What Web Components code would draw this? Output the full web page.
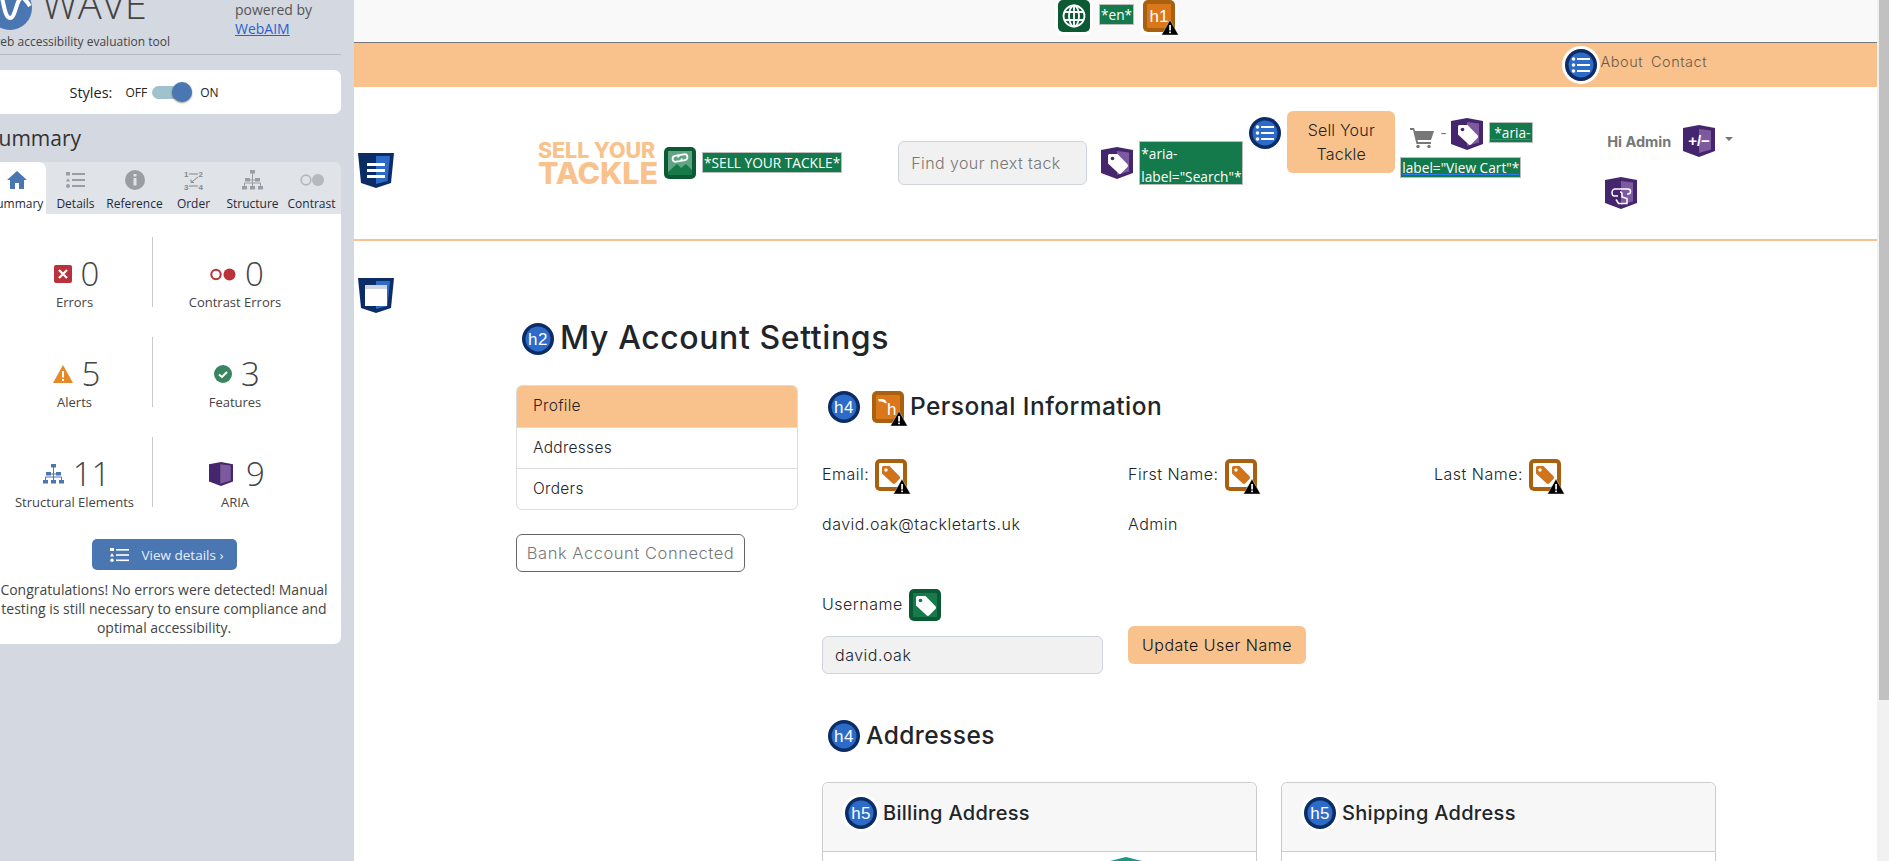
<!DOCTYPE html>
<html lang="en">
<head>
<meta charset="utf-8">
<title>My Account Settings</title>
<style>
  html, body { margin: 0; height: 100%; overflow: hidden; background: #fff; }
  body { display: flex; font-family: Inter, "Open Sans", sans-serif; }
</style>
</head>
<body>
<wave-sidebar></wave-sidebar>
<site-page></site-page>
<page-scrollbar></page-scrollbar>

<script>
const TAG = (hole) => `<path d="M7 8.5a1.5 1.5 0 0 1 1.5-1.5h8l10 10.2a2 2 0 0 1 0 2.8l-6.200 6.200a2 2 0 0 1-2.800 0L7 16.500z" fill="#fff"/><circle cx="11.500" cy="11.500" r="1.800" fill="${hole}"/>`;
const LIST = `<g fill="#fff"><circle cx="8.500" cy="10" r="1.800"/><circle cx="8.500" cy="16" r="1.800"/><circle cx="8.500" cy="22" r="1.800"/><rect x="12" y="9" width="13" height="2"/><rect x="12" y="15" width="13" height="2"/><rect x="12" y="21" width="13" height="2"/></g>`;
const WARN = `<polygon points="27,20 35.500,35 18.500,35" fill="#000" stroke="#fff" stroke-width=".4"/><rect x="26.200" y="25" width="1.700" height="5.500" fill="#fff"/><rect x="26.200" y="31.500" width="1.700" height="1.700" fill="#fff"/>`;
const label = (t, size) => `<text x="16" y="${size === 14 ? 21 : 22}" text-anchor="middle" font-family="Liberation Sans, sans-serif" font-size="${size || 17}" fill="#fff">${t}</text>`;

const square = (outer, inner, body) => `<rect width="32" height="32" rx="5" fill="${outer}"/><rect x="4" y="4" width="24" height="24" rx="1" fill="${inner}"/>${body}`;
const circle = (body) => `<circle cx="16" cy="16" r="16" fill="#0c2c66"/><circle cx="16" cy="16" r="12.500" fill="#2d6bc8"/>${body}`;
const shield = (body) => `<path d="M0 3 16 0l16 3v23l-16 6-16-6z" fill="#45266e"/><path d="M16 4l12 1.500v19L16 28z" fill="#7d5a9e"/>${body}`;

const GLYPHS = {
  globe: square('#0b5a33', '#0b5a33', `<g fill="none" stroke="#fff" stroke-width="1.800"><circle cx="16" cy="16" r="10.500"/><ellipse cx="16" cy="16" rx="5" ry="10.500"/><path d="M16 5.500v21M6.500 12h19M6.500 20h19"/></g>`),
  h1: square('#a9600f', '#d9771a', label('h1') + WARN),
  hskip: square('#a9600f', '#d9771a', `<text x="20" y="24" text-anchor="middle" font-family="Liberation Sans, sans-serif" font-size="17" fill="#fff">h</text><path d="M6 8h5l2 1 2 2.500-1 1-4-2H7z" fill="#fff"/>` + WARN),
  tagAlert: square('#a9600f', '#fff', `<path d="M7 8.500a1.500 1.500 0 0 1 1.500-1.500h6l10 10.200a2 2 0 0 1 0 2.800l-4.200 4.200a2 2 0 0 1-2.800 0L7 14.500z" fill="#d0731a"/><circle cx="11" cy="11" r="1.700" fill="#fff"/>` + WARN),
  tagGreen: square('#0b5a33', '#167a4b', TAG('#167a4b')),
  linkImg: square('#0b5a33', '#167a4b', `<path d="M4 4h24v19l-6-6-5 4-4-4-9 8z" fill="#5fa583"/><g fill="none" stroke="#fff" stroke-width="1.800" stroke-linecap="round" transform="rotate(-10 16 11)"><path d="M15 8h-3.500a3 3 0 0 0 0 6H15a3 3 0 0 0 2.500-1.500"/><path d="M17 14h3.500a3 3 0 0 0 0-6H17a3 3 0 0 0-2.500 1.500"/></g>`),
  list: circle(LIST),
  h2: circle(label('h2')),
  h4: circle(label('h4')),
  h5: circle(label('h5')),
  tagAria: shield(TAG('#45266e')),
  plusMinus: shield(`<text x="16" y="21" text-anchor="middle" font-family="Liberation Sans, sans-serif" font-size="15" fill="#fff">+/−</text>`),
  touch: shield(`<path d="M13 19H9.500C7.500 19 7 17 7 15.500 7 13.500 8.500 12 10 12h13c1.500 0 2.500 1 2.500 2.500S24.500 17 23 17h-1M15 15a2 2 0 0 1 2 2v3l5 1.500v5H13.500L11 22.500" fill="none" stroke="#fff" stroke-width="1.500"/>`),
  teal: `<path d="M0 4 16 0l16 4v22l-16 6-16-6z" fill="#1a9988"/>`
};

class WaveIcon extends HTMLElement {
  constructor() {
    super();
    this._shadowRoot = this.attachShadow({mode: 'open'});
  }
  connectedCallback() {
    this.render();
  }
  render() {
    const name = this.getAttribute('name');
    const ring = this.hasAttribute('ring');
    const round = name === 'list' || /^h[245]$/.test(name);
    this._shadowRoot.innerHTML = `
      <style>
        :host { display: inline-block; width: 32px; height: 32px; flex: none; vertical-align: middle; }
        svg { display: block; overflow: visible; border-radius: ${round ? '50%' : '5px'}; ${ring ? 'box-shadow: 0 0 0 3px #fff;' : ''} }
      </style>
      <svg width="32" height="32" viewBox="0 0 32 32" aria-hidden="true">${GLYPHS[name]}</svg>`;
  }
}
customElements.define('wave-icon', WaveIcon);

class WaveLabel extends HTMLElement {
  constructor() {
    super();
    this._shadowRoot = this.attachShadow({mode: 'open'});
    this._shadowRoot.innerHTML = `
      <style>
        :host {
          display: inline;
          background: #157a4b;
          color: #fff;
          border: 1px solid #bdbdbd;
          font: 13.700px/19px "Open Sans", sans-serif;
          letter-spacing: 0;
          -webkit-box-decoration-break: clone;
          box-decoration-break: clone;
          padding: 0 1px;
        }
        :host([block]) { display: block; box-sizing: border-box; padding: 0 1px; line-height: 23px; }
      </style><slot></slot>`;
  }
}
customElements.define('wave-label', WaveLabel);

class WaveTab extends HTMLElement {
  constructor() {
    super();
    this._shadowRoot = this.attachShadow({mode: 'open'});
    this._shadowRoot.innerHTML = `
      <style>
        :host {
          display: flex; flex-direction: column; align-items: center;
          width: 59px; height: 52px; padding-top: 7px; box-sizing: border-box;
          font: 12px/16px "Open Sans", sans-serif; color: #1e2a3c; white-space: nowrap;
        }
        :host([active]) { background: #fff; border-radius: 0 7px 0 0; }
        .ic { height: 21px; margin-bottom: 6px; display: flex; align-items: center; }
      </style>
      <div class="ic"><slot name="icon"></slot></div>
      <slot></slot>`;
  }
}
customElements.define('wave-tab', WaveTab);

class WaveStat extends HTMLElement {
  constructor() {
    super();
    this._shadowRoot = this.attachShadow({mode: 'open'});
    this._shadowRoot.innerHTML = `
      <style>
        :host { display: flex; flex-direction: column; align-items: center; height: 70px; padding-top: 22px; box-sizing: border-box; color: #444; }
        .top { display: flex; align-items: center; gap: 9px; height: 30px; padding-left: 4px; font: 300 33px/30px "Open Sans", sans-serif; }
        .name { margin-top: 4px; font: 13px/18px "Open Sans", sans-serif; white-space: nowrap; }
      </style>
      <div class="top"><slot name="icon"></slot><slot name="num"></slot></div>
      <div class="name"><slot></slot></div>`;
  }
}
customElements.define('wave-stat', WaveStat);

class WaveSidebar extends HTMLElement {
  constructor() {
    super();
    this._shadowRoot = this.attachShadow({mode: 'open'});
    this.render();
  }
  render() {
    const gray = '#9a9da1';
    this._shadowRoot.innerHTML = `
      <style>
        :host { display: block; width: 354px; height: 861px; flex: none; overflow: hidden; background: #d4d8e0; color: #444; font-family: "Open Sans", sans-serif; }
        .in { width: 354px; margin: -24px 0 0 -13px; }
        .brand { display: grid; grid-template-columns: 248px 1fr; height: 79px; box-sizing: border-box; border-bottom: 1px solid #b5b9bd; }
        .logo { display: flex; height: 54px; }
        .wave { font: 300 40px/56px "Open Sans", sans-serif; color: #444; margin-left: 10px; }
        .tool { font-size: 12px; line-height: 18px; white-space: nowrap; margin-top: 3px; margin-left: 4px; }
        .pow { font-size: 14px; line-height: 19px; padding-top: 24px; color: #555; }
        .pow a { color: #2b5fd0; }
        .styles { margin-top: 15px; height: 44px; background: #fff; border-radius: 0 7px 7px 0; display: flex; align-items: center; justify-content: center; padding-right: 40px; color: #222; font-size: 12px; }
        .styles b { font-weight: 400; font-size: 14.500px; margin-right: 13px; }
        .sw { position: relative; width: 40px; height: 13px; border-radius: 7px; background: #a1c1cc; margin: 0 8px 0 5px; }
        .sw i { position: absolute; right: 0; top: -4px; width: 20px; height: 20px; border-radius: 50%; background: #4a76b2; box-shadow: 0 1px 2px rgba(0,0,0,.45); }
        h2 { margin: 10px 0 0 0; font: 400 21px/28px "Open Sans", sans-serif; color: #333; }
        .tabs { display: flex; margin-top: 10px; background: #e0e3e8; border-radius: 0 7px 0 0; }
        .panel { background: #fff; height: 430px; border-radius: 0 0 7px 0; box-sizing: border-box; padding-top: 23px; }
        .grid { display: grid; grid-template-columns: 156px 164px; row-gap: 30px; padding-left: 10px; }
        .grid wave-stat:nth-child(odd) { border-right: 1px solid #ccc; }
        .btn { display: flex; align-items: center; width: 145px; height: 31px; margin: 32px auto 0; padding-left: 18px; gap: 13px; box-sizing: border-box; background: #4a76b2; border-radius: 5px; color: #e8eef6; font-size: 13.500px; }
        p { margin: 10px 0 0; padding: 0; text-align: center; font-size: 14px; line-height: 19px; white-space: nowrap; }
      </style>
      <div class="in">
        <div class="brand">
          <div>
            <div class="logo">
              <svg width="44" height="44" viewBox="0 0 44 44" style="margin:10px 0 0 1px;flex:none"><circle cx="22" cy="22" r="22" fill="#4a76b2" /><path d="M10 6C16 6 15 32 22 32 28 32 28 12 34 12 37 12 39 16 42 20" fill="none" stroke="#fff" stroke-width="4"/></svg>
              <div class="wave">WAVE</div>
            </div>
            <div class="tool">web accessibility evaluation tool</div>
          </div>
          <div class="pow">powered by<br><a href="#">WebAIM</a></div>
        </div>
        <div class="styles"><b>Styles:</b>OFF<div class="sw"><i></i></div>ON</div>
        <h2>Summary</h2>
        <div class="tabs">
          <wave-tab active>
            <svg slot="icon" width="20" height="18" viewBox="0 0 20 18"><path d="M10 0 0 9h3v9h5v-6h4v6h5V9h3z" fill="#4a76b2"/></svg>Summary</wave-tab>
          <wave-tab>
            <svg slot="icon" width="20" height="16" viewBox="0 0 20 16" fill="${gray}"><rect width="4" height="3.500"/><polygon points="2,6 4,9.500 0,9.500"/><circle cx="2" cy="14" r="2"/><rect x="6" y="1" width="13" height="2"/><rect x="6" y="7" width="13" height="2"/><rect x="6" y="13" width="13" height="2"/></svg>Details</wave-tab>
          <wave-tab>
            <svg slot="icon" width="20" height="20" viewBox="0 0 20 20"><circle cx="10" cy="10" r="10" fill="${gray}"/><rect x="8.500" y="8" width="3" height="7.500" fill="#e0e3e8"/><rect x="8.500" y="4" width="3" height="2.500" fill="#e0e3e8"/></svg>Reference</wave-tab>
          <wave-tab>
            <svg slot="icon" width="20" height="20" viewBox="0 0 20 20"><g font-family="Liberation Sans, sans-serif" font-size="8" font-weight="700" fill="#85888c"><text x="0" y="7">1</text><text x="14.500" y="7">2</text><text x="0" y="19.500">3</text><text x="14.500" y="19.500">4</text></g><path d="M5 4h9M14 7 7 12.500M7 9.500v3h3M5 16h9" stroke="#85888c" stroke-width="1" fill="none"/></svg>Order</wave-tab>
          <wave-tab>
            <svg slot="icon" width="21" height="20" viewBox="0 0 21 20" fill="${gray}"><rect x="8" y="0" width="5" height="3.500"/><rect x="3" y="8" width="5" height="3.500"/><rect x="13" y="8" width="5" height="3.500"/><rect x="0" y="16" width="5" height="3.500"/><rect x="8" y="16" width="5" height="3.500"/><rect x="16" y="16" width="5" height="3.500"/><path d="M10.500 3v13M5 10h11M2.500 16v-3h16v3" stroke="${gray}" fill="none"/></svg>Structure</wave-tab>
          <wave-tab>
            <svg slot="icon" width="24" height="12" viewBox="0 0 24 12"><circle cx="6" cy="6" r="4.800" fill="none" stroke="#b5b8bc" stroke-width="1.700"/><circle cx="18" cy="6" r="6" fill="#b5b8bc"/></svg>Contrast</wave-tab>
        </div>
        <div class="panel">
          <div class="grid">
            <wave-stat>
              <svg slot="icon" width="18" height="18" viewBox="0 0 18 18"><rect width="18" height="18" rx="2" fill="#b9313a"/><path d="M5 5l8 8M13 5l-8 8" stroke="#fff" stroke-width="2.200"/></svg>
              <span slot="num">0</span>Errors</wave-stat>
            <wave-stat>
              <svg slot="icon" width="26" height="13" viewBox="0 0 26 13"><circle cx="6" cy="6.500" r="4.700" fill="none" stroke="#b9313a" stroke-width="2"/><circle cx="19.500" cy="6.500" r="6" fill="#b9313a"/></svg>
              <span slot="num">0</span>Contrast Errors</wave-stat>
            <wave-stat>
              <svg slot="icon" width="20" height="18" viewBox="0 0 20 18"><polygon points="10,0 20,18 0,18" fill="#e58a26"/><rect x="9" y="6" width="2" height="6.500" fill="#fff"/><rect x="9" y="14" width="2" height="2" fill="#fff"/></svg>
              <span slot="num">5</span>Alerts</wave-stat>
            <wave-stat>
              <svg slot="icon" width="18" height="18" viewBox="0 0 18 18"><circle cx="9" cy="9" r="9" fill="#3a8560"/><path d="M5 9.500l3 2.500 5-5" fill="none" stroke="#fff" stroke-width="2"/></svg>
              <span slot="num">3</span>Features</wave-stat>
            <wave-stat>
              <svg slot="icon" width="21" height="20" viewBox="0 0 21 20" fill="#4a76b2"><rect x="8" y="0" width="5" height="3.500"/><rect x="3" y="8" width="5" height="3.500"/><rect x="13" y="8" width="5" height="3.500"/><rect x="0" y="16" width="5" height="3.500"/><rect x="8" y="16" width="5" height="3.500"/><rect x="16" y="16" width="5" height="3.500"/><path d="M10.500 3v13M5 10h11M2.500 16v-3h16v3" stroke="#4a76b2" fill="none"/></svg>
              <span slot="num">11</span>Structural Elements</wave-stat>
            <wave-stat>
              <svg slot="icon" width="24" height="24" viewBox="0 0 32 32" style="margin-right:4px"><path d="M0 3 16 0l16 3v23l-16 6-16-6z" fill="#45266e"/><path d="M15 3l14 1.500v20L15 29z" fill="#7d5a9e"/></svg>
              <span slot="num">9</span>ARIA</wave-stat>
          </div>
          <div class="btn">
            <svg width="19" height="14" viewBox="0 0 19 14" fill="#fff"><rect width="4" height="3"/><polygon points="2,5 4,8.500 0,8.500"/><circle cx="2" cy="12.300" r="1.700"/><rect x="6" y="1" width="13" height="1.600"/><rect x="6" y="6.200" width="13" height="1.600"/><rect x="6" y="11.500" width="13" height="1.600"/></svg>
            View details ›
          </div>
          <p>Congratulations! No errors were detected! Manual<br>testing is still necessary to ensure compliance and<br>optimal accessibility.</p>
        </div>
      </div>`;
  }
}
customElements.define('wave-sidebar', WaveSidebar);

class PageScrollbar extends HTMLElement {
  constructor() {
    super();
    this._shadowRoot = this.attachShadow({mode: 'open'});
    this._shadowRoot.innerHTML = `
      <style>
        :host { display: block; width: 12px; height: 861px; flex: none; background: #f1f1f1; padding-left: 2px; box-sizing: border-box; }
        div { height: 700px; background: #c1c1c1; }
      </style><div></div>`;
  }
}
customElements.define('page-scrollbar', PageScrollbar);

class LandmarkIcon extends HTMLElement {
  constructor() {
    super();
    this._shadowRoot = this.attachShadow({mode: 'open'});
  }
  connectedCallback() {
    const body = this.getAttribute('kind') === 'nav'
      ? `<g fill="#fff"><rect x="9" y="10" width="18" height="3"/><rect x="9" y="16" width="18" height="3"/><rect x="9" y="22" width="18" height="3"/></g>`
      : `<rect x="7" y="7" width="22" height="4" fill="#cdd3e0"/><rect x="7" y="11" width="22" height="17" fill="#fff"/>`;
    this._shadowRoot.innerHTML = `
      <style>:host { display: block; width: 36px; height: 35px; } svg { display: block; }</style>
      <svg width="36" height="35" viewBox="0 0 36 35"><path d="M0 0h36l-3 30-15 5-15-5z" fill="#0c2c66"/><path d="M18 3h14l-2.500 25L18 31z" fill="#2d6bc8"/>${body}</svg>`;
  }
}
customElements.define('landmark-icon', LandmarkIcon);

class SiteHeader extends HTMLElement {
  constructor() {
    super();
    this._shadowRoot = this.attachShadow({mode: 'open'});
    this._shadowRoot.innerHTML = `
      <style>
        :host { display: block; color: #212529; font-family: Inter, sans-serif; }
        .strip { display: flex; justify-content: center; align-items: flex-start; height: 42px; background: #f9f9f9; border-bottom: 1px solid #777; padding-left: 2px; }
        .strip wave-label { margin: 4px 9px 0 9px; display: block; height: 19px; }
        .bar { display: flex; justify-content: flex-end; align-items: center; gap: 8px; height: 44px; background: #f9c28d; padding-right: 170px; font-size: 14.500px; letter-spacing: .5px; font-weight: 300; color: #6e5a48; }
        .bar wave-icon { margin-right: -4px; }
        .bar span { margin-bottom: 7px; }
        .main { position: relative; display: flex; align-items: flex-start; height: 152px; padding-left: 184px; border-bottom: 2px solid #f9c28d; }
        .logo { width: 118px; margin-top: 53px; color: #f9c28d; font-weight: 800; text-transform: uppercase; white-space: nowrap; }
        .logo div:first-child { font-size: 21.500px; line-height: 20px; letter-spacing: -.1px; }
        .logo div:last-child { font-size: 30.500px; line-height: 25px; letter-spacing: -.2px; }
        .ml { margin: 60px 6px 0 8px; }
        .name { margin-top: 65px; white-space: nowrap; }
        input { width: 189px; height: 44px; margin: 54px 14px 0 56px; box-sizing: border-box; padding: 0 12px; background: #f1f1f1; border: 1px solid #cfd3da; border-radius: 6px; font: 300 16px Inter, sans-serif; letter-spacing: .4px; color: #777; flex: none; }
        input::placeholder { color: #777; opacity: 1; }
        .sr { width: 104px; margin: 54px 6px 0 6px; flex: none; }
        .sr wave-label { height: 44px; }
        .sell { display: flex; align-items: center; justify-content: center; width: 108px; height: 62px; margin: 24px 5px 0 6px; text-align: center; background: #f9c28d; border-radius: 6px; font-size: 16px; letter-spacing: .2px; line-height: 24px; font-weight: 300; color: #222; flex: none; }
        .cart { width: 148px; margin-top: 28px; line-height: 35px; font-size: 14px; color: #2a7cf0; flex: none; }
        .cart svg { vertical-align: -9.500px; margin: 0 6px 0 10px; }
        .cart wave-icon { margin: 0 6px 0 4px; }
        .cart wave-label { text-decoration: underline #2a7cf0; }
        .admin { margin: 38px 0 0 59px; flex: none; }
        .admin .r { display: flex; align-items: center; font-size: 14.500px; font-weight: 700; color: #777; }
        .admin .r wave-icon { margin: 0 10px 0 12px; }
        .caret { width: 0; height: 0; border: 4px solid transparent; border-top-color: #777; border-bottom: 0; margin-top: -4px; }
        .admin > wave-icon { margin: 20px 0 0 -2px; display: block; }
        .marks { position: absolute; left: 4px; top: 66px; }
      </style>
      <div class="strip"><wave-icon name="globe" ring></wave-icon><wave-label>*en*</wave-label><wave-icon name="h1" ring></wave-icon></div>
      <div class="bar"><wave-icon name="list" ring></wave-icon><span>About</span><span>Contact</span></div>
      <div class="main">
        <div class="logo"><div>Sell Your</div><div>Tackle</div></div>
        <wave-icon class="ml" name="linkImg"></wave-icon>
        <div class="name"><wave-label>*SELL YOUR TACKLE*</wave-label></div>
        <input placeholder="Find your next tack" aria-label="Search">
        <wave-icon name="tagAria" style="margin-top:60px"></wave-icon>
        <div class="sr"><wave-label block>*aria-label="Search"*</wave-label></div>
        <wave-icon name="list" style="margin-top:30px"></wave-icon>
        <div class="sell">Sell Your Tackle</div>
        <div class="cart"><svg width="24" height="20" viewBox="0 0 24 20" fill="#777"><path d="M0 0h4l1 3h19l-3 9H7.500l.5 2h13v2H6.500L3 2H0z"/><circle cx="8" cy="18.500" r="1.700"/><circle cx="19" cy="18.500" r="1.700"/></svg>-<wave-icon name="tagAria"></wave-icon><wave-label>*aria-label="View Cart"*</wave-label></div>
        <div class="admin">
          <div class="r">Hi Admin<wave-icon name="plusMinus"></wave-icon><span class="caret"></span></div>
          <wave-icon name="touch"></wave-icon>
        </div>
        <landmark-icon class="marks" kind="nav"></landmark-icon>
      </div>`;
  }
}
customElements.define('site-header', SiteHeader);

class SideMenu extends HTMLElement {
  constructor() {
    super();
    this._shadowRoot = this.attachShadow({mode: 'open'});
    this._shadowRoot.innerHTML = `
      <style>
        :host { display: block; font-size: 15.500px; letter-spacing: .3px; font-weight: 300; color: #212529; }
        ul { list-style: none; margin: 0; padding: 0; border: 1px solid #ddd; border-radius: 6px; overflow: hidden; }
        li { height: 40px; line-height: 40px; padding-left: 16px; border-top: 1px solid #ddd; }
        li:first-child { height: 42px; line-height: 42px; margin: -1px -1px 0; padding-left: 17px; background: #f9c28d; border: 0; }
        .bank { margin-top: 24px; width: 229px; height: 38px; line-height: 36px; box-sizing: border-box; border: 1px solid #666; border-radius: 6px; text-align: center; color: #777; font-size: 16.500px; letter-spacing: .55px; white-space: nowrap; }
      </style>
      <ul><li>Profile</li><li>Addresses</li><li>Orders</li></ul>
      <div class="bank">Bank Account Connected</div>`;
  }
}
customElements.define('side-menu', SideMenu);

class AddressCard extends HTMLElement {
  constructor() {
    super();
    this._shadowRoot = this.attachShadow({mode: 'open'});
    this._shadowRoot.innerHTML = `
      <style>
        :host { display: block; height: 120px; border: 1px solid #ccc; border-bottom: 0; border-radius: 6px 6px 0 0; overflow: hidden; box-sizing: border-box; }
        header { display: flex; align-items: center; gap: 6px; height: 60px; padding: 0 0 8px 22px; background: #f7f7f7; border-bottom: 1px solid #ccc; font-size: 20px; letter-spacing: .3px; font-weight: 500; color: #212529; }
        .foot { display: flex; padding: 5px 0 0 287px; }
      </style>
      <header><wave-icon name="h5" ring></wave-icon><slot></slot></header>
      <div class="foot"><slot name="foot"></slot></div>`;
  }
}
customElements.define('address-card', AddressCard);

class AccountSettings extends HTMLElement {
  constructor() {
    super();
    this._shadowRoot = this.attachShadow({mode: 'open'});
    this._shadowRoot.innerHTML = `
      <style>
        :host { display: block; position: relative; padding: 82px 0 0 162px; color: #212529; font-family: Inter, sans-serif; font-weight: 300; font-size: 16px; letter-spacing: .5px; }
        h2 { display: flex; align-items: center; gap: 6px; margin: 0 0 30px 6px; height: 32px; font-size: 32px; letter-spacing: .6px; font-weight: 500; white-space: nowrap; }
        h2 span { margin-top: -4px; }
        .cols { display: grid; grid-template-columns: 282px 894px; column-gap: 24px; }
        h4 { display: flex; align-items: center; margin: 6px 0 36px 6px; height: 32px; font-size: 24.500px; letter-spacing: .45px; font-weight: 500; white-space: nowrap; }
        h4 span { margin-top: -2px; }
        .three { display: grid; grid-template-columns: repeat(3, 306px); }
        .lab { display: flex; align-items: center; gap: 6px; height: 32px; }
        .lab span { margin-top: -2px; }
        .val { margin-top: 22px; line-height: 22px; height: 76px; }
        .user { display: grid; grid-template-columns: 306px 1fr; }
        .user .lab { grid-column: 1 / 3; }
        input { display: block; width: 281px; height: 38px; margin-top: 15px; box-sizing: border-box; padding: 0 12px; background: #f1f1f1; border: 1px solid #cfd3da; border-radius: 6px; font: 300 16px Inter, sans-serif; letter-spacing: .5px; color: #212529; }
        .upd { width: 178px; height: 38px; line-height: 38px; margin-top: 5px; text-align: center; background: #f9c28d; border-radius: 6px; color: #111; white-space: nowrap; }
        .addr { margin: 46px 0 30px 6px; }
        .cards { display: grid; grid-template-columns: 435px 435px; column-gap: 24px; }
        .marks { position: absolute; left: 4px; top: 37px; }
      </style>
      <landmark-icon class="marks" kind="main"></landmark-icon>
      <h2><wave-icon name="h2" ring></wave-icon><span>My Account Settings</span></h2>
      <div class="cols">
        <side-menu></side-menu>
        <div>
          <h4><wave-icon name="h4" ring></wave-icon><wave-icon name="hskip" ring style="margin:0 6px 0 12px"></wave-icon><span>Personal Information</span></h4>
          <div class="three">
            <div class="lab"><span>Email:</span><wave-icon name="tagAlert"></wave-icon></div>
            <div class="lab"><span>First Name:</span><wave-icon name="tagAlert"></wave-icon></div>
            <div class="lab"><span>Last Name:</span><wave-icon name="tagAlert"></wave-icon></div>
            <div class="val">david.oak@tackletarts.uk</div>
            <div class="val">Admin</div>
            <div class="val"></div>
          </div>
          <div class="user">
            <div class="lab"><span>Username</span><wave-icon name="tagGreen"></wave-icon></div>
            <input value="david.oak" aria-label="Username">
            <div class="upd">Update User Name</div>
          </div>
          <h4 class="addr"><wave-icon name="h4" ring style="margin-right:6px"></wave-icon><span>Addresses</span></h4>
          <div class="cards">
            <address-card>Billing Address<wave-icon slot="foot" name="teal"></wave-icon></address-card>
            <address-card>Shipping Address</address-card>
          </div>
        </div>
      </div>`;
  }
}
customElements.define('account-settings', AccountSettings);

class SitePage extends HTMLElement {
  constructor() {
    super();
    this._shadowRoot = this.attachShadow({mode: 'open'});
    this._shadowRoot.innerHTML = `
      <style>:host { display: block; flex: 1; min-width: 0; height: 861px; overflow: hidden; background: #fff; }</style>
      <site-header></site-header>
      <account-settings></account-settings>`;
  }
}
customElements.define('site-page', SitePage);
</script>
</body>
</html>
